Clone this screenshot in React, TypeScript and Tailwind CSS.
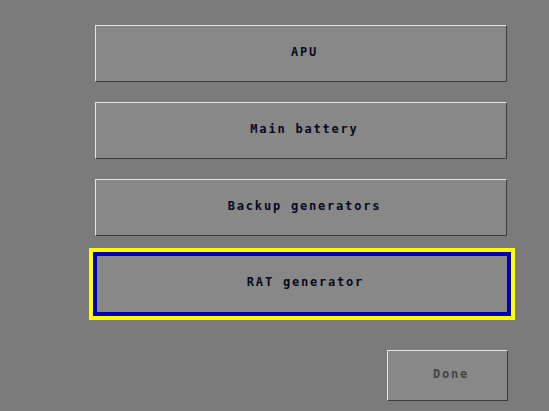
const labelFont = "font-['DejaVu_Sans_Mono',monospace] font-bold text-[12px] tracking-[1.8px] pb-[4px] pl-[7px]";

function PanelButton({ label, selected }: { label: string; selected?: boolean }) {
  if (selected) {
    return (
      <div className="-ml-[6px] -mr-[8px] border-4 border-[#ffff00]">
        <div className="border-4 border-[#0000b8] bg-[#888888] h-[64px] flex items-center justify-center">
          <span className={`${labelFont} text-[#080820]`}>{label}</span>
        </div>
      </div>
    );
  }
  return (
    <div className="h-[57px] bg-[#888888] border border-t-[#e4e4e4] border-l-[#e4e4e4] border-b-[#3c3c3c] border-r-[#3c3c3c] flex items-center justify-center">
      <span className={`${labelFont} text-[#080820]`}>{label}</span>
    </div>
  );
}

export default function App() {
  const items = ["APU", "Main battery", "Backup generators", "RAT generator"];
  return (
    <div className="w-[549px] h-[411px] bg-[#7b7b7b] relative overflow-hidden">
      <div className="ml-[95px] w-[412px] pt-[25px] flex flex-col gap-[20px]">
        {items.map((item, i) => (
          <div key={item} className={i === 3 ? "-mt-[8px]" : ""}>
            <PanelButton label={item} selected={i === 3} />
          </div>
        ))}
      </div>
      <div className="ml-[387px] mt-[30px] w-[121px] h-[51px] bg-[#888888] border border-t-[#e4e4e4] border-l-[#e4e4e4] border-b-[#3c3c3c] border-r-[#3c3c3c] flex items-center justify-center">
        <span className={`${labelFont} text-[#444444]`}>Done</span>
      </div>
    </div>
  );
}
